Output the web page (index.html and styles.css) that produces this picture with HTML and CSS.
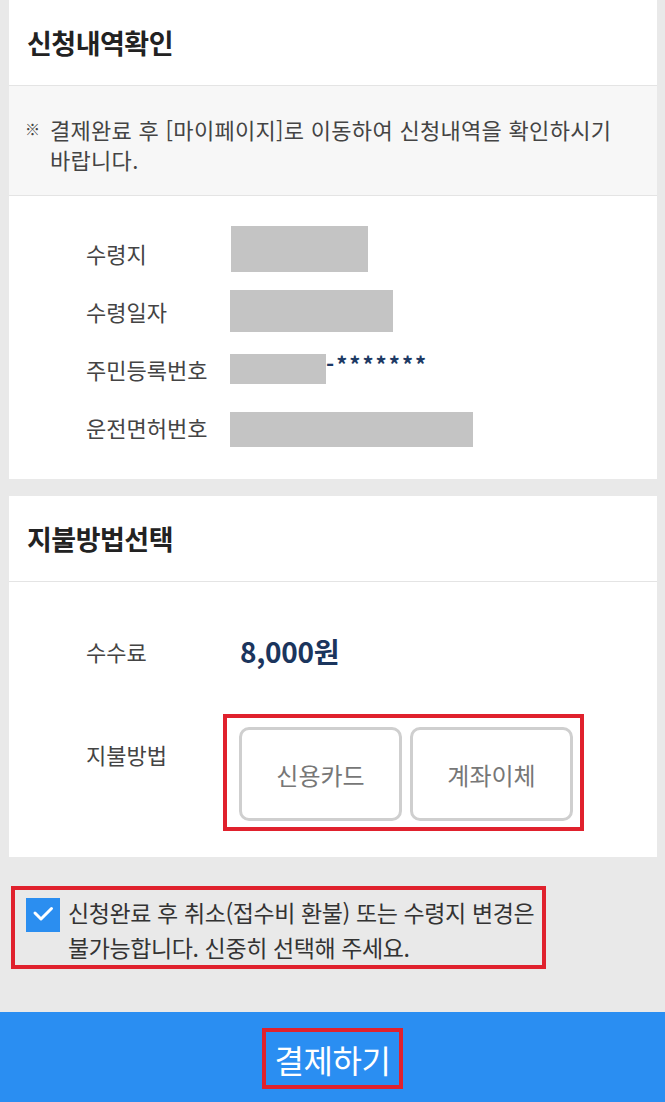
FILE: index.html
```html
<!DOCTYPE html>
<html lang="ko">
<head>
<meta charset="utf-8">
<title>신청내역확인</title>
<link rel="stylesheet" href="styles.css">
</head>
<body>
<div class="page">
  <section class="card card-first">
    <h2 class="card-title">신청내역확인</h2>
    <div class="notice">
      <span class="notice-mark">※</span>
      <p class="notice-text">결제완료 후 [마이페이지]로 이동하여 신청내역을 확인하시기 바랍니다.</p>
    </div>
    <div class="info">
      <div class="info-row">
        <span class="label">수령지</span>
        <span class="mask mask-1"></span>
      </div>
      <div class="info-row">
        <span class="label">수령일자</span>
        <span class="mask mask-2"></span>
      </div>
      <div class="info-row">
        <span class="label">주민등록번호</span>
        <span class="mask mask-3"></span><span class="rrn-tail">-*******</span>
      </div>
      <div class="info-row">
        <span class="label">운전면허번호</span>
        <span class="mask mask-4"></span>
      </div>
    </div>
  </section>

  <section class="card card-second">
    <h2 class="card-title">지불방법선택</h2>
    <div class="pay">
      <div class="pay-row fee-row">
        <span class="label">수수료</span>
        <span class="fee">8,000원</span>
      </div>
      <div class="pay-row method-row">
        <span class="label method-label">지불방법</span>
        <div class="highlight method-box">
          <button class="method-btn" type="button">신용카드</button>
          <button class="method-btn" type="button">계좌이체</button>
        </div>
      </div>
    </div>
  </section>

  <div class="agree-wrap">
    <label class="highlight agree">
      <span class="checkbox">
        <svg width="34" height="34" viewBox="0 0 34 34" aria-hidden="true"><polyline points="9,15 15,21 25.5,10.5" fill="none" stroke="#ffffff" stroke-width="3" stroke-linecap="round" stroke-linejoin="round"/></svg>
      </span>
      <span class="agree-text">신청완료 후 취소(접수비 환불) 또는 수령지 변경은<br>불가능합니다. 신중히 선택해 주세요.</span>
    </label>
  </div>

  <div class="paybar">
    <span class="highlight paybar-text">결제하기</span>
  </div>
</div>
</body>
</html>
```

FILE: styles.css
```css
html, body {
  margin: 0;
  padding: 0;
}
body {
  background: #e9e9e9;
  font-family: "Noto Sans CJK KR", "Noto Sans", sans-serif;
  color: #333;
}
.page {
  width: 665px;
  min-height: 1102px;
  display: flex;
  flex-direction: column;
}
.card {
  background: #ffffff;
  margin: 0 8px 0 9px;
}
.card-second {
  margin-top: 17px;
}
.card-title {
  margin: 0;
  height: 86px;
  box-sizing: border-box;
  padding-left: 18px;
  display: flex;
  align-items: center;
  font-size: 27px;
  font-weight: 700;
  color: #222;
  border-bottom: 1px solid #e4e4e4;
  letter-spacing: -0.5px;
}
.notice {
  background: #f7f7f7;
  border-bottom: 1px solid #e4e4e4;
  display: flex;
  padding: 28px 30px 21px 16px;
  font-size: 22px;
  line-height: 30px;
  color: #444;
}
.notice-mark {
  width: 25px;
  flex: none;
  font-size: 15px;
}
.notice-text {
  margin: 0;
  letter-spacing: 0.3px;
}
.info {
  padding: 28px 0 23px 77px;
}
.info-row {
  height: 58px;
  display: flex;
  align-items: center;
}
.label {
  width: 144px;
  flex: none;
  font-size: 22px;
  line-height: 30px;
  color: #444;
}
.mask {
  display: block;
  background: #c4c4c4;
}
.mask-1 { width: 137px; height: 46px; margin-top: -8px; margin-left: 1px; }
.mask-2 { width: 163px; height: 42px; }
.mask-3 { width: 96px; height: 30px; }
.mask-4 { width: 243px; height: 35px; margin-top: 5px; }
.rrn-tail {
  font-size: 22px;
  font-weight: 700;
  color: #1d3a64;
  letter-spacing: 2px;
  margin-top: -12px;
}
.pay {
  padding: 49px 0 26px 77px;
}
.pay-row {
  display: flex;
}
.pay .label {
  width: 137px;
}
.fee-row {
  height: 40px;
  align-items: center;
}
.fee {
  margin-left: 17px;
  font-size: 28px;
  font-weight: 700;
  color: #1b355d;
  letter-spacing: -0.3px;
}
.method-row {
  margin-top: 43px;
  align-items: flex-start;
}
.method-label {
  padding-top: 25px;
}
.highlight {
  border: 4px solid #e0212d;
}
.method-box {
  width: 361px;
  height: 117px;
  box-sizing: border-box;
  display: flex;
  gap: 8px;
  padding: 9px 0 0 12px;
}
.method-btn {
  width: 163px;
  height: 94px;
  box-sizing: border-box;
  border: 3px solid #cfcfcf;
  border-radius: 10px;
  background: #ffffff;
  font-family: inherit;
  font-size: 24px;
  color: #777;
  padding: 0;
}
.agree-wrap {
  padding: 29px 0 0 11px;
  display: flex;
}
.agree {
  width: 535px;
  height: 83px;
  box-sizing: border-box;
  display: flex;
  align-items: flex-start;
  padding: 8px 0 0 11px;
}
.checkbox {
  width: 34px;
  height: 34px;
  flex: none;
  background: #2b8ef0;
  display: block;
}
.checkbox svg {
  display: block;
}
.agree-text {
  margin-left: 8px;
  margin-top: -3px;
  font-size: 23px;
  line-height: 35px;
  color: #333;
  white-space: nowrap;
  letter-spacing: -0.4px;
}
.paybar {
  margin-top: 43px;
  height: 90px;
  background: #2a8ef2;
  display: flex;
  justify-content: center;
  align-items: flex-start;
}
.paybar-text {
  margin-top: 16px;
  width: 141px;
  height: 61px;
  box-sizing: border-box;
  display: flex;
  align-items: center;
  justify-content: center;
  color: #ffffff;
  font-size: 32px;
  letter-spacing: -0.5px;
}
```
